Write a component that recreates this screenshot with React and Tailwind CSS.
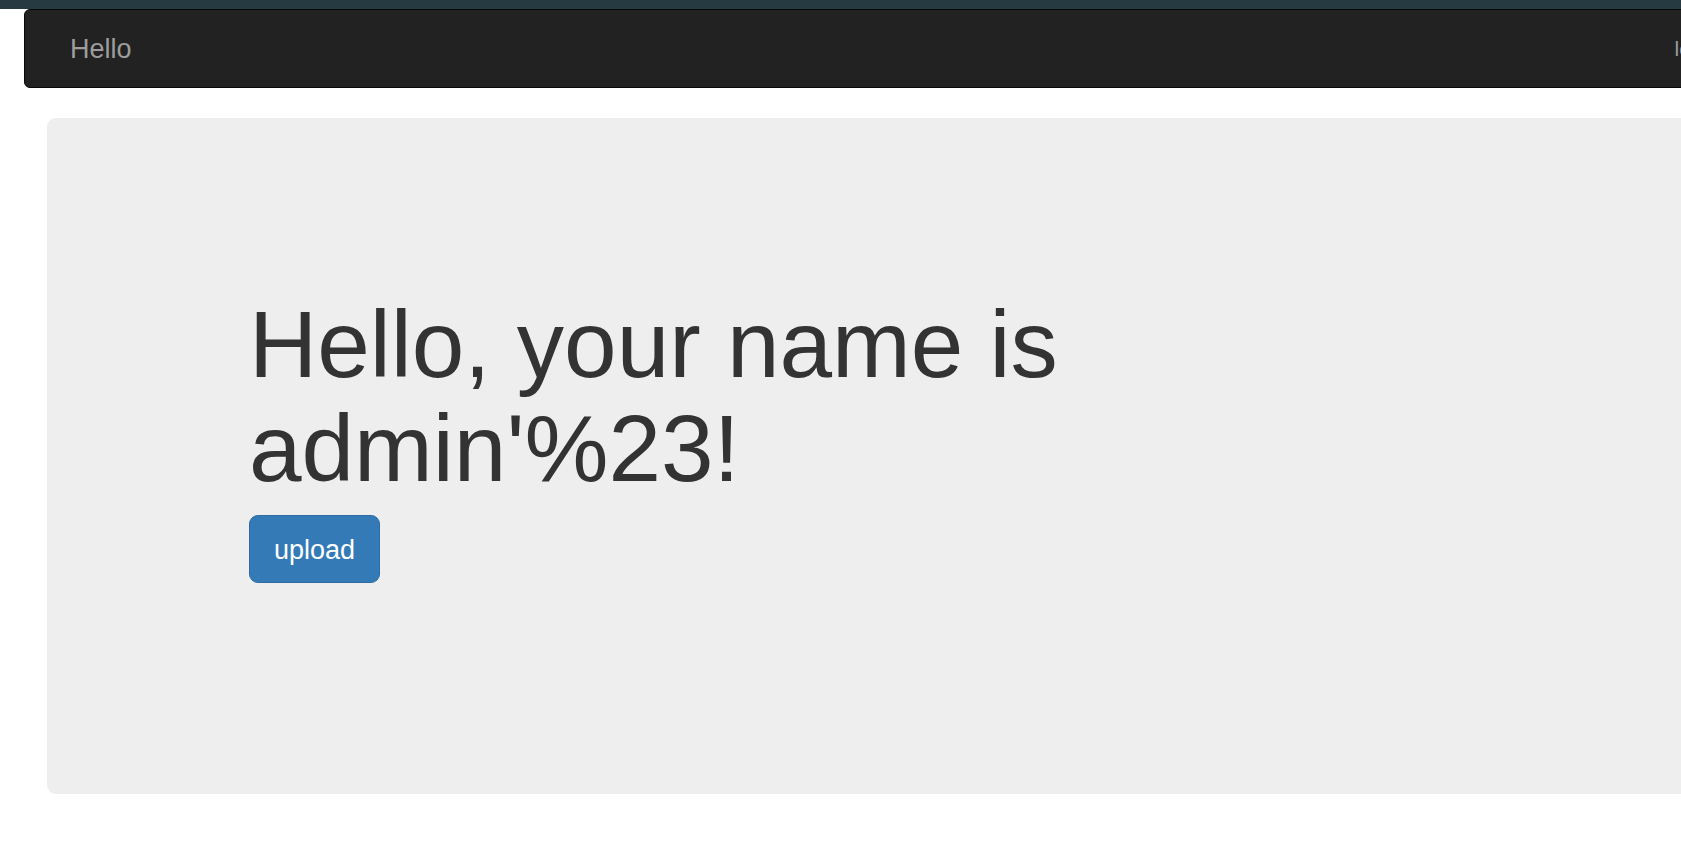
export default function App() {
  return (
    <div className="min-h-screen w-full overflow-hidden bg-white font-['Liberation_Sans',Arial,sans-serif]">
      <div className="h-[9px] bg-[#253a41]" />
      <div className="pl-[24px]">
        <nav className="flex h-[79px] w-[1800px] items-center rounded-[6px] border border-[#080808] bg-[#222222]">
          <a className="pl-[45px] text-[27px] leading-[30px] text-[#9d9d9d]">Hello</a>
          <a className="ml-[1543px] text-[21px] leading-[30px] text-[#9d9d9d]">login</a>
        </nav>
      </div>
      <div className="mt-[30px] pl-[47px]">
        <div className="w-[1800px] rounded-[9px] bg-[#eeeeee] pt-[175px] pb-[211px] pl-[202px]">
          <h1 className="mb-[14px] w-[1000px] text-[94.5px] leading-[1.1] font-normal text-[#333333]">
            Hello, your name is admin'%23!
          </h1>
          <button className="flex h-[68px] w-[131px] items-center justify-center rounded-[9px] border border-[#2e6da4] bg-[#337ab7] pt-[2px] text-[27px] text-white">
            upload
          </button>
        </div>
      </div>
    </div>
  );
}
